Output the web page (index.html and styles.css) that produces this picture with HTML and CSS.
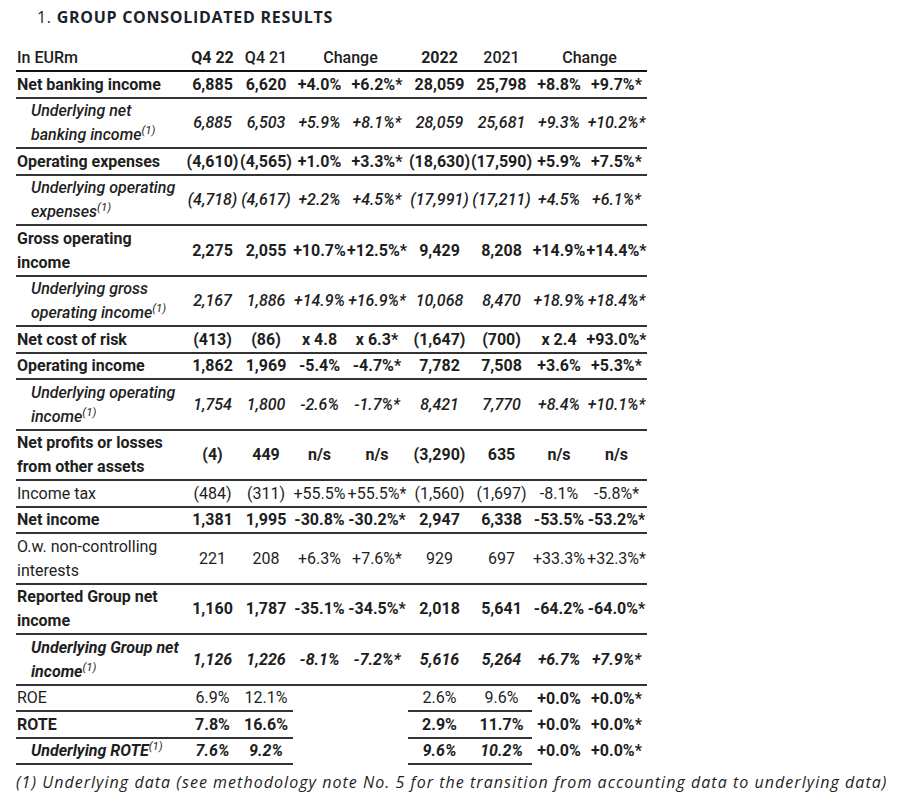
FILE: index.html
```html
<!DOCTYPE html>
<html lang="en">
<head>
<meta charset="utf-8">
<title>Group consolidated results</title>
<link rel="stylesheet" href="styles.css">
</head>
<body>
<div class="page">
  <h2 class="title"><span class="num">1.</span> GROUP CONSOLIDATED RESULTS</h2>
  <table class="results">
    <colgroup>
      <col class="w-label">
      <col class="w-53">
      <col class="w-54">
      <col class="w-53">
      <col class="w-62">
      <col class="w-63">
      <col class="w-61">
      <col class="w-54">
      <col class="w-61">
    </colgroup>
    <thead>
      <tr>
        <th class="label">In EURm</th>
        <th class="strong">Q4 22</th>
        <th>Q4 21</th>
        <th colspan="2">Change</th>
        <th class="strong">2022</th>
        <th>2021</th>
        <th colspan="2">Change</th>
      </tr>
    </thead>
    <tbody>
      <tr class="bold">
        <td class="label">Net banking income</td>
        <td>6,885</td><td>6,620</td><td>+4.0%</td><td>+6.2%*</td><td>28,059</td><td>25,798</td><td>+8.8%</td><td>+9.7%*</td>
      </tr>
      <tr class="ital">
        <td class="label sub">Underlying net banking income<sup>(1)</sup></td>
        <td>6,885</td><td>6,503</td><td>+5.9%</td><td>+8.1%*</td><td>28,059</td><td>25,681</td><td>+9.3%</td><td>+10.2%*</td>
      </tr>
      <tr class="bold">
        <td class="label">Operating expenses</td>
        <td>(4,610)</td><td>(4,565)</td><td>+1.0%</td><td>+3.3%*</td><td>(18,630)</td><td>(17,590)</td><td>+5.9%</td><td>+7.5%*</td>
      </tr>
      <tr class="ital">
        <td class="label sub">Underlying operating expenses<sup>(1)</sup></td>
        <td>(4,718)</td><td>(4,617)</td><td>+2.2%</td><td>+4.5%*</td><td>(17,991)</td><td>(17,211)</td><td>+4.5%</td><td>+6.1%*</td>
      </tr>
      <tr class="bold">
        <td class="label">Gross operating income</td>
        <td>2,275</td><td>2,055</td><td>+10.7%</td><td>+12.5%*</td><td>9,429</td><td>8,208</td><td>+14.9%</td><td>+14.4%*</td>
      </tr>
      <tr class="ital">
        <td class="label sub">Underlying gross operating income<sup>(1)</sup></td>
        <td>2,167</td><td>1,886</td><td>+14.9%</td><td>+16.9%*</td><td>10,068</td><td>8,470</td><td>+18.9%</td><td>+18.4%*</td>
      </tr>
      <tr class="bold">
        <td class="label">Net cost of risk</td>
        <td>(413)</td><td>(86)</td><td>x 4.8</td><td>x 6.3*</td><td>(1,647)</td><td>(700)</td><td>x 2.4</td><td>+93.0%*</td>
      </tr>
      <tr class="bold">
        <td class="label">Operating income</td>
        <td>1,862</td><td>1,969</td><td>-5.4%</td><td>-4.7%*</td><td>7,782</td><td>7,508</td><td>+3.6%</td><td>+5.3%*</td>
      </tr>
      <tr class="ital">
        <td class="label sub">Underlying operating income<sup>(1)</sup></td>
        <td>1,754</td><td>1,800</td><td>-2.6%</td><td>-1.7%*</td><td>8,421</td><td>7,770</td><td>+8.4%</td><td>+10.1%*</td>
      </tr>
      <tr class="bold">
        <td class="label">Net profits or losses from other assets</td>
        <td>(4)</td><td>449</td><td>n/s</td><td>n/s</td><td>(3,290)</td><td>635</td><td>n/s</td><td>n/s</td>
      </tr>
      <tr>
        <td class="label">Income tax</td>
        <td>(484)</td><td>(311)</td><td>+55.5%</td><td>+55.5%*</td><td>(1,560)</td><td>(1,697)</td><td>-8.1%</td><td>-5.8%*</td>
      </tr>
      <tr class="bold">
        <td class="label">Net income</td>
        <td>1,381</td><td>1,995</td><td>-30.8%</td><td>-30.2%*</td><td>2,947</td><td>6,338</td><td>-53.5%</td><td>-53.2%*</td>
      </tr>
      <tr>
        <td class="label">O.w. non-controlling interests</td>
        <td>221</td><td>208</td><td>+6.3%</td><td>+7.6%*</td><td>929</td><td>697</td><td>+33.3%</td><td>+32.3%*</td>
      </tr>
      <tr class="bold">
        <td class="label">Reported Group net income</td>
        <td>1,160</td><td>1,787</td><td>-35.1%</td><td>-34.5%*</td><td>2,018</td><td>5,641</td><td>-64.2%</td><td>-64.0%*</td>
      </tr>
      <tr class="bold ital">
        <td class="label sub">Underlying Group net income<sup>(1)</sup></td>
        <td>1,126</td><td>1,226</td><td>-8.1%</td><td>-7.2%*</td><td>5,616</td><td>5,264</td><td>+6.7%</td><td>+7.9%*</td>
      </tr>
      <tr class="ratio">
        <td class="label">ROE</td>
        <td>6.9%</td><td>12.1%</td><td class="gap"></td><td class="gap"></td><td>2.6%</td><td>9.6%</td><td class="gap chg">+0.0%</td><td class="gap chg">+0.0%*</td>
      </tr>
      <tr class="ratio bold">
        <td class="label">ROTE</td>
        <td>7.8%</td><td>16.6%</td><td class="gap"></td><td class="gap"></td><td>2.9%</td><td>11.7%</td><td class="gap chg">+0.0%</td><td class="gap chg">+0.0%*</td>
      </tr>
      <tr class="ratio bold ital">
        <td class="label sub">Underlying ROTE<sup>(1)</sup></td>
        <td>7.6%</td><td>9.2%</td><td class="gap"></td><td class="gap"></td><td>9.6%</td><td>10.2%</td><td class="gap chg">+0.0%</td><td class="gap chg">+0.0%*</td>
      </tr>
    </tbody>
  </table>
  <p class="note">(1) Underlying data (see methodology note No. 5 for the transition from accounting data to underlying data)</p>
</div>
</body>
</html>
```

FILE: styles.css
```css
html, body {
  margin: 0;
  padding: 0;
  background: #ffffff;
}

.page {
  padding: 6px 0 0 16px;
  color: #1e1e1e;
}

.title {
  margin: 0 0 17.5px 21px;
  font-family: "Open Sans", "Liberation Sans", sans-serif;
  font-size: 16px;
  line-height: 22px;
  font-weight: 700;
  letter-spacing: 0.72px;
  color: #1c222c;
}

.title .num {
  font-weight: 400;
}

.results {
  border-collapse: collapse;
  table-layout: fixed;
  width: 631px;
  font-family: Roboto, "Liberation Sans", sans-serif;
  font-size: 16px;
  line-height: 24px;
  color: #1e1e1e;
}

.w-label { width: 170px; }
.w-53 { width: 53px; }
.w-54 { width: 54px; }
.w-62 { width: 62px; }
.w-63 { width: 63px; }
.w-61 { width: 61px; }

.results th,
.results td {
  padding: 0.5px 0 0;
  text-align: center;
  vertical-align: middle;
  white-space: nowrap;
  font-weight: 400;
}

.results th {
  font-weight: 500;
  border-bottom: 2px solid #111111;
}

.results th.strong {
  font-weight: 700;
}

.results td {
  border-bottom: 2px solid #333333;
}

.results .label {
  text-align: left;
  white-space: normal;
  padding-left: 1px;
}

.results .label.sub {
  padding-left: 15px;
}

.results tr.bold td {
  font-weight: 700;
}

.results tr.ital td {
  font-style: italic;
  font-weight: 500;
}

.results tr.bold.ital td {
  font-weight: 700;
}

.results sup {
  font-size: 11.5px;
  line-height: 0;
  vertical-align: 6px;
  font-style: italic;
  font-weight: 400;
}

.results tr.ratio td.gap {
  border-bottom: none;
}

.results tr.ratio td.chg {
  font-weight: 700;
  font-style: normal;
}

.note {
  margin: 6px 0 0;
  font-family: "Open Sans", "Liberation Sans", sans-serif;
  font-style: italic;
  font-size: 16px;
  line-height: 22px;
  letter-spacing: 1.04px;
  color: #1e1e1e;
}
```
